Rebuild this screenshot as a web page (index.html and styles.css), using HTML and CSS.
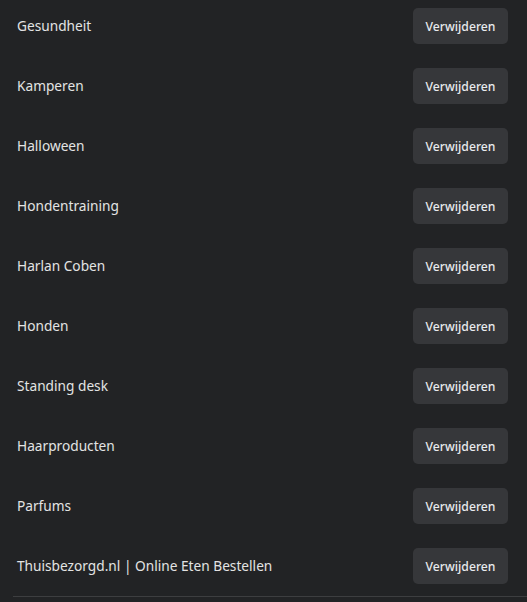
FILE: index.html
```html
<!DOCTYPE html>
<html lang="nl">
<head>
<meta charset="utf-8">
<link rel="stylesheet" href="styles.css">
</head>
<body>
<div class="list">
  <div class="row"><span class="label">Gesundheit</span><button class="btn">Verwijderen</button></div>
  <div class="row"><span class="label">Kamperen</span><button class="btn">Verwijderen</button></div>
  <div class="row"><span class="label">Halloween</span><button class="btn">Verwijderen</button></div>
  <div class="row"><span class="label">Hondentraining</span><button class="btn">Verwijderen</button></div>
  <div class="row"><span class="label">Harlan Coben</span><button class="btn">Verwijderen</button></div>
  <div class="row"><span class="label">Honden</span><button class="btn">Verwijderen</button></div>
  <div class="row"><span class="label">Standing desk</span><button class="btn">Verwijderen</button></div>
  <div class="row"><span class="label">Haarproducten</span><button class="btn">Verwijderen</button></div>
  <div class="row"><span class="label">Parfums</span><button class="btn">Verwijderen</button></div>
  <div class="row"><span class="label">Thuisbezorgd.nl | Online Eten Bestellen</span><button class="btn">Verwijderen</button></div>
</div>
<div class="divider"></div>
</body>
</html>
```

FILE: styles.css
```css
html, body {
  margin: 0;
  padding: 0;
  background: #222325;
  height: 100%;
  overflow: hidden;
}
body {
  font-family: "Noto Sans", "Open Sans", sans-serif;
  color: #e3e3e3;
}
.list {
  display: flex;
  flex-direction: column;
  gap: 8px;
  padding: 0 19px 4px 17px;
}
.row {
  height: 52px;
  display: flex;
  align-items: center;
  justify-content: space-between;
}
.label {
  font-size: 13.7px;
  margin-top: -2px;
}
.btn {
  height: 36px;
  width: 95px;
  border: none;
  border-radius: 5px;
  background: #36373a;
  color: #e8eaed;
  font-family: "Noto Sans", "Open Sans", sans-serif;
  font-size: 12.2px;
  font-weight: 500;
  padding: 0;
}
.divider {
  margin-left: 13px;
  height: 1px;
  background: #3d3e40;
}
```
